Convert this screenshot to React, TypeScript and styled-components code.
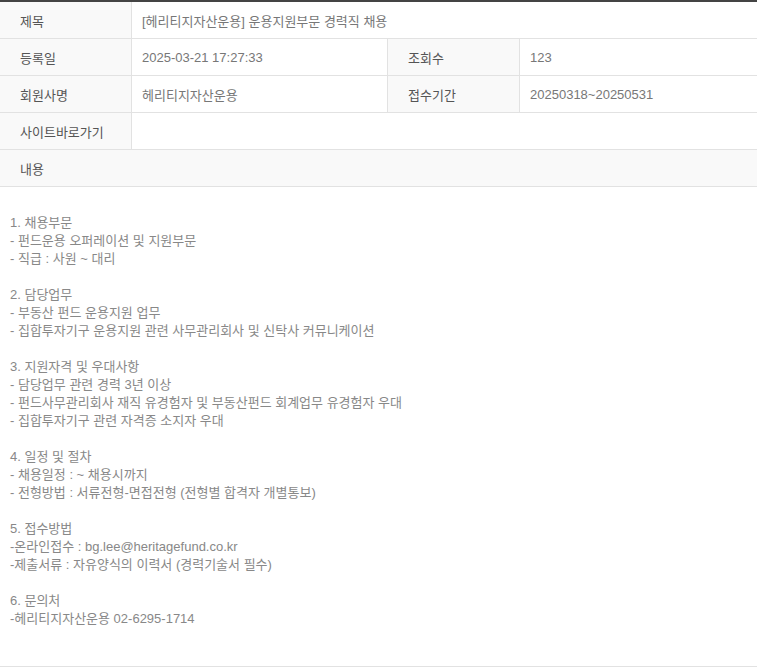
import styled, { createGlobalStyle } from "styled-components";

const GlobalStyle = createGlobalStyle`
  html, body {
    margin: 0;
    padding: 0;
    background: #fff;
  }
  body {
    font-family: "Liberation Sans", "Noto Sans CJK KR", sans-serif;
    font-size: 13px;
  }
`;

const Board = styled.div`
  width: 757px;
  border-top: 2px solid #444;
  border-bottom: 1px solid #e2e2e2;
`;

const Row = styled.div`
  display: grid;
  grid-template-columns: 132px 256px 132px 1fr;
  height: 37px;
  border-bottom: 1px solid #e2e2e2;
  box-sizing: border-box;
`;

const Label = styled.div`
  display: flex;
  align-items: center;
  padding-left: 20px;
  background: #f9f9f9;
  color: #555;
  border-right: 1px solid #e2e2e2;
`;

const Value = styled.div<{ $span?: number; $last?: boolean }>`
  display: flex;
  align-items: center;
  padding-left: 10px;
  color: #777;
  grid-column: span ${(p) => p.$span ?? 1};
  border-right: ${(p) => (p.$last ? "none" : "1px solid #e2e2e2")};
`;

const HeadRow = styled.div`
  display: flex;
  align-items: center;
  height: 37px;
  box-sizing: border-box;
  padding-left: 20px;
  background: #f9f9f9;
  color: #555;
  border-bottom: 1px solid #e2e2e2;
`;

const Content = styled.div`
  padding: 27px 10px 38px;
  color: #888;
  line-height: 18px;
`;

const Line = styled.p`
  margin: 0;
  min-height: 18px;
`;

const body = [
  "1. 채용부문",
  "- 펀드운용 오퍼레이션 및 지원부문",
  "- 직급 : 사원 ~ 대리",
  "",
  "2. 담당업무",
  "- 부동산 펀드 운용지원 업무",
  "- 집합투자기구 운용지원 관련 사무관리회사 및 신탁사 커뮤니케이션",
  "",
  "3. 지원자격 및 우대사항",
  "- 담당업무 관련 경력 3년 이상",
  "- 펀드사무관리회사 재직 유경험자 및 부동산펀드 회계업무 유경험자 우대",
  "- 집합투자기구 관련 자격증 소지자 우대",
  "",
  "4. 일정 및 절차",
  "- 채용일정 : ~ 채용시까지",
  "- 전형방법 : 서류전형-면접전형 (전형별 합격자 개별통보)",
  "",
  "5. 접수방법",
  "-온라인접수 : bg.lee@heritagefund.co.kr",
  "-제출서류 : 자유양식의 이력서 (경력기술서 필수)",
  "",
  "6. 문의처",
  "-헤리티지자산운용 02-6295-1714",
];

export default function App() {
  return (
    <>
      <GlobalStyle />
      <Board>
        <Row>
          <Label>제목</Label>
          <Value $span={3} $last>[헤리티지자산운용] 운용지원부문 경력직 채용</Value>
        </Row>
        <Row>
          <Label>등록일</Label>
          <Value>2025-03-21 17:27:33</Value>
          <Label>조회수</Label>
          <Value $last>123</Value>
        </Row>
        <Row>
          <Label>회원사명</Label>
          <Value>헤리티지자산운용</Value>
          <Label>접수기간</Label>
          <Value $last>20250318~20250531</Value>
        </Row>
        <Row>
          <Label>사이트바로가기</Label>
          <Value $span={3} $last></Value>
        </Row>
        <HeadRow>내용</HeadRow>
        <Content>
          {body.map((line, i) => (
            <Line key={i}>{line}</Line>
          ))}
        </Content>
      </Board>
    </>
  );
}
